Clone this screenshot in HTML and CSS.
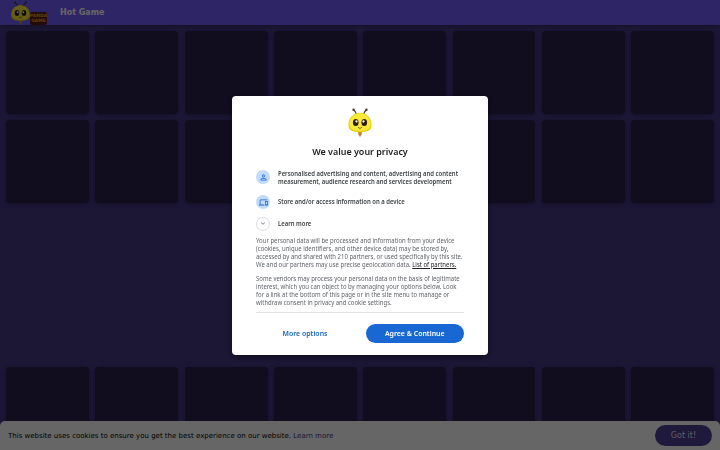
FILE: index.html
```html
<!DOCTYPE html>
<html lang="en">
<head>
    <meta charset="UTF-8" />
    <meta name="viewport" content="width=device-width, initial-scale=1" />
    <title>Hot Game</title>
    <link rel="stylesheet" href="styles.css">
</head>
<body>
    <svg width="0" height="0" class="sprite">
        <symbol id="bee" viewBox="0 0 24 30">
            <path d="M8.5 7 Q7.500 3.500 5.500 1.800 M15.500 7 Q16.500 3.500 18.500 1.800" fill="none" stroke="#3b3020" stroke-width="1.200"/>
            <circle cx="5.3" cy="1.8" r="1.2" fill="#3b3020"/>
            <circle cx="18.700" cy="1.8" r="1.2" fill="#3b3020"/>
            <path d="M10 24 H14 L13.800 27.500 L12 30 L10.200 27.500 Z" fill="#b88a3c"/>
            <path d="M12 5 C18 5 24 9.500 24 17.500 C24 23 20 25 12 25 C4 25 0 23 0 17.500 C0 9.500 6 5 12 5 Z" fill="#e6cf14"/>
            <path d="M12 5.500 C17 5.500 22.800 10 23 16.500 C23 21.500 19 23.500 12 23.500 C5 23.500 1 21.500 1 16.500 C1.200 10 7 5.500 12 5.500 Z" fill="#f9ea3a"/>
            <ellipse cx="7.6" cy="15" rx="2.900" ry="3.7" fill="#2a1c10"/>
            <ellipse cx="16.4" cy="15" rx="2.900" ry="3.7" fill="#2a1c10"/>
            <circle cx="8.400" cy="14" r="1.200" fill="#fff"/>
            <circle cx="15.600" cy="14" r="1.200" fill="#fff"/>
            <path d="M10 20 Q12 22.300 14 20" fill="none" stroke="#6b4a10" stroke-width=".9"/>
        </symbol>
    </svg>

    <header class="header">
        <div class="logo">
            <svg class="logo-bee"><use href="#bee"/></svg>
            <div class="logo-text"><span>PANDA</span><span>GAME</span></div>
        </div>
        <h1>Hot Game</h1>
    </header>

    <main>
        <div class="games">
            <div class="card"></div><div class="card"></div><div class="card"></div><div class="card"></div>
            <div class="card"></div><div class="card"></div><div class="card"></div><div class="card"></div>
            <div class="card"></div><div class="card"></div><div class="card"></div><div class="card"></div>
            <div class="card"></div><div class="card"></div><div class="card"></div><div class="card"></div>
        </div>
        <div class="banner"></div>
        <div class="games">
            <div class="card"></div><div class="card"></div><div class="card"></div><div class="card"></div>
            <div class="card"></div><div class="card"></div><div class="card"></div><div class="card"></div>
        </div>
    </main>

    <div class="cookie-bar">
        <p>This website uses cookies to ensure you get the best experience on our website. <a>Learn more</a></p>
        <button class="cookie-btn">Got it!</button>
    </div>

    <div class="consent-bg">
        <div class="consent">
            <svg class="consent-logo"><use href="#bee"/></svg>
            <h2>We value your privacy</h2>
            <div class="purposes">
                <div class="purpose">
                    <span class="icon">
                        <svg viewBox="0 0 24 24"><path d="M12 12c2.21 0 4-1.79 4-4s-1.790-4-4-4-4 1.790-4 4 1.790 4 4 4zm0-6a2 2 0 1 1 0 4 2 2 0 0 1 0-4zm0 7c-2.670 0-8 1.340-8 4v3h16v-3c0-2.660-5.330-4-8-4zm6 5H6v-1c.2-.7 3.300-2 6-2s5.800 1.300 6 2v1z"/></svg>
                    </span>
                    <p>Personalised advertising and content, advertising and content<br>measurement, audience research and services development</p>
                </div>
                <div class="purpose">
                    <span class="icon">
                        <svg viewBox="0 0 24 24"><path d="M4 6h18V4H4c-1.100 0-2 .9-2 2v11H0v3h14v-3H4V6zm19 2h-6c-.550 0-1 .450-1 1v10c0 .550.450 1 1 1h6c.550 0 1-.450 1-1V9c0-.550-.450-1-1-1zm-1 9h-4v-7h4v7z"/></svg>
                    </span>
                    <p>Store and/or access information on a device</p>
                </div>
                <div class="purpose">
                    <span class="icon more">
                        <svg viewBox="0 0 24 24"><path d="M7.410 8.590L12 13.170l4.590-4.580L18 10l-6 6-6-6z"/></svg>
                    </span>
                    <p>Learn more</p>
                </div>
            </div>
            <div class="details">
                <p>Your personal data will be processed and information from your device<br>(cookies, unique identifiers, and other device data) may be stored by,<br>accessed by and shared with 210 partners, or used specifically by this site.<br>We and our partners may use precise geolocation data. <a>List of partners.</a></p>
                <p>Some vendors may process your personal data on the basis of legitimate<br>interest, which you can object to by managing your options below. Look<br>for a link at the bottom of this page or in the site menu to manage or<br>withdraw consent in privacy and cookie settings.</p>
            </div>
            <div class="actions">
                <button class="options-btn"><span>More options</span></button>
                <button class="agree-btn"><span>Agree &amp; Continue</span></button>
            </div>
        </div>
    </div>
</body>
</html>
```
FILE: styles.css
```css
* {
    box-sizing: border-box;
}
body {
    margin: 0;
    height: 100vh;
    overflow: hidden;
    background: #463a86;
    font-family: 'DejaVu Sans', sans-serif;
}
h1, h2, p {
    margin: 0;
}
button {
    border: none;
    padding: 0;
    cursor: pointer;
}
.sprite {
    position: absolute;
}
.header {
    display: flex;
    align-items: center;
    height: 25px;
    padding-left: 11px;
    background: #745cff;
    box-shadow: 0 1px 4px rgba(0, 0, 0, 0.35);
}
.header h1 {
    color: #fff;
    font-size: 8px;
    line-height: 10px;
}
.logo {
    display: flex;
    width: 49px;
}
.logo-bee {
    width: 19px;
    height: 24px;
}
.logo-text {
    display: flex;
    flex-direction: column;
    align-items: center;
    align-self: flex-end;
    width: 17px;
    height: 13px;
    padding-top: 1px;
    background: #55201c;
    border-radius: 2px;
    color: #f09a20;
    font-size: 4.5px;
    font-weight: bold;
    line-height: 5.5px;
}
.games {
    display: grid;
    grid-template-columns: repeat(8, 1fr);
    gap: 6.4px;
    padding: 6px 6px 0;
}
.card {
    aspect-ratio: 1;
    background: #2b204c;
    border-radius: 4px;
    box-shadow: 0 1px 4px rgba(0, 0, 0, 0.35);
}
.banner {
    height: 157.5px;
}
.cookie-bar {
    position: fixed;
    left: 0;
    right: 0;
    bottom: 0;
    display: flex;
    align-items: center;
    justify-content: space-between;
    height: 29px;
    padding: 0 8px;
    background: #fff;
    border-radius: 5px 5px 0 0;
    color: #000;
    font-size: 7px;
}
.cookie-bar a {
    color: #463a86;
}
.cookie-btn {
    width: 57px;
    height: 21px;
    background: #4f4296;
    border-radius: 11px;
    color: #e4e0f4;
    font-family: inherit;
    font-size: 8px;
}
.consent-bg {
    position: fixed;
    inset: 0;
    display: flex;
    align-items: center;
    justify-content: center;
    background: rgba(0, 0, 0, 0.6);
    font-family: 'Noto Sans', sans-serif;
}
.consent {
    display: flex;
    flex-direction: column;
    width: 256px;
    height: 259px;
    padding: 12px 24px;
    background: #fff;
    border-radius: 4px;
    box-shadow: 0 2px 6px rgba(0, 0, 0, 0.5);
    color: #3c4043;
    white-space: nowrap;
}
.consent-logo {
    align-self: center;
    width: 24px;
    height: 30px;
}
.consent h2 {
    margin-top: 9px;
    color: #202124;
    font-size: 9.5px;
    font-weight: 600;
    line-height: 12px;
    text-align: center;
    transform: scaleX(0.94);
}
.purposes {
    margin-top: 12.5px;
    font-size: 6.5px;
    font-weight: 600;
    line-height: 8px;
}
/* slightly condensed text */
.purpose p,
.details p {
    transform: scaleX(0.912);
    transform-origin: left;
}
.purpose {
    display: flex;
    align-items: center;
    gap: 8px;
    margin-bottom: 9px;
}
.purpose:first-child .icon {
    margin-top: -2px;
}
.purpose:nth-child(2) {
    margin-bottom: 7.5px;
}
.purpose:last-child {
    margin-bottom: 6px;
}
.purpose .icon {
    display: flex;
    align-items: center;
    justify-content: center;
    flex-shrink: 0;
    width: 14px;
    height: 14px;
    background: #c2dafc;
    border-radius: 50%;
}
.icon svg {
    width: 9px;
    height: 9px;
    fill: #1a66d0;
}
.purpose .more {
    background: none;
    border: 0.5px solid #dadce0;
}
.more svg {
    width: 8px;
    fill: #5f6368;
}
.details {
    color: #5f6368;
    font-size: 6.5px;
    line-height: 8px;
}
.details p {
    margin-bottom: 6px;
    transform: scaleX(0.918);
}
.details p:last-child {
    margin-bottom: 5px;
}
.details a {
    color: #202124;
    text-decoration: underline;
}
.actions {
    display: flex;
    justify-content: space-between;
    padding-top: 11px;
    border-top: 1px solid #e0e2e6;
}
.actions button {
    width: 98px;
    height: 19px;
    border-radius: 10px;
    font-family: inherit;
    font-size: 7.4px;
    font-weight: 600;
}
.actions span {
    display: inline-block;
    transform: scaleX(0.94);
}
.options-btn {
    background: none;
    color: #1a66b8;
}
.agree-btn {
    background: #1967d2;
    color: #fff;
}
```
